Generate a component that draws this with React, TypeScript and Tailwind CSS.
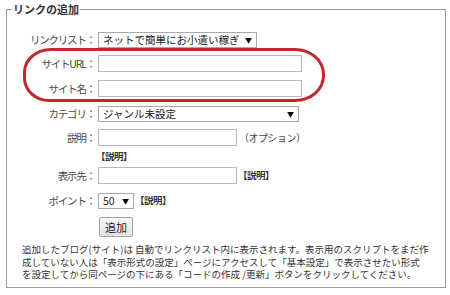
import React from "react";

const font = { fontFamily: '"Noto Sans CJK JP", "Noto Sans", sans-serif' };

function Label({ children }: { children: React.ReactNode }) {
  return (
    <div className="w-[88px] shrink-0 text-right text-[10.5px] tracking-[-1.2px] leading-[17px] text-[#4a4a4a] whitespace-nowrap">
      {children}
    </div>
  );
}

function FakeSelect({ w, text }: { w: string; text: string }) {
  return (
    <div
      className={`${w} h-[16px] border border-[#a9a9a9] bg-white flex items-center justify-between pl-[4px] pr-[4px] text-[10.5px] leading-[14px] text-[#222]`}
    >
      <span className="whitespace-nowrap">{text}</span>
      <span className="text-[7px] text-black">▼</span>
    </div>
  );
}

function TextInput({ w }: { w: string }) {
  return <div className={`${w} h-[17px] border border-[#b8b8b8] bg-white`} />;
}

function Setsumei() {
  return <span className="text-[9.5px] font-bold text-[#333] whitespace-nowrap tracking-[-0.5px]">【説明】</span>;
}

export default function App() {
  return (
    <div className="relative w-[450px] h-[295px] bg-white overflow-hidden" style={font}>
      <fieldset className="ml-[6px] mt-[2px] w-[440px] h-[286px] border border-[#9a9a9a]">
        <legend className="ml-[5px] px-[1px] text-[11px] leading-[14px] font-bold text-[#333]">
          リンクの追加
        </legend>

        <div className="flex flex-col">
          <div className="flex items-center mt-[15px]">
            <Label>リンクリスト：</Label>
            <div className="ml-[3px]">
              <FakeSelect w="w-[159px]" text="ネットで簡単にお小遣い稼ぎ" />
            </div>
          </div>

          <div className="flex items-center mt-[7px]">
            <Label>サイトURL：</Label>
            <div className="ml-[3px]">
              <TextInput w="w-[204px]" />
            </div>
          </div>

          <div className="flex items-center mt-[8px]">
            <Label>サイト名：</Label>
            <div className="ml-[3px]">
              <TextInput w="w-[204px]" />
            </div>
          </div>

          <div className="flex items-center mt-[8px]">
            <Label>カテゴリ：</Label>
            <div className="ml-[3px]">
              <FakeSelect w="w-[201px]" text="ジャンル未設定" />
            </div>
          </div>

          <div className="flex items-start mt-[7px]">
            <Label>説明：</Label>
            <div className="ml-[3px] flex flex-col">
              <div className="flex items-center gap-[2px]">
                <TextInput w="w-[139px]" />
                <span className="text-[10px] text-[#444] whitespace-nowrap tracking-[-0.5px]">（オプション）</span>
              </div>
              <div className="mt-[1px] leading-[13px] -ml-[2px]">
                <Setsumei />
              </div>
            </div>
          </div>

          <div className="flex items-center mt-[4px]">
            <Label>表示先：</Label>
            <div className="ml-[3px] flex items-center gap-[1px]">
              <TextInput w="w-[139px]" />
              <Setsumei />
            </div>
          </div>

          <div className="flex items-center mt-[8px]">
            <Label>ポイント：</Label>
            <div className="ml-[3px] flex items-center gap-[1px]">
              <FakeSelect w="w-[36px]" text="50" />
              <Setsumei />
            </div>
          </div>

          <div className="flex mt-[8px]">
            <div className="w-[88px] shrink-0" />
            <div className="ml-[4px]">
              <div className="w-[34px] h-[20px] border border-[#a6a6a6] rounded-[2px] bg-gradient-to-b from-[#f8f8f8] to-[#e2e2e2] flex items-center justify-center text-[11px] text-[#222]">
                追加
              </div>
            </div>
          </div>

          <p className="ml-[15px] mt-[6px] text-[9.5px] leading-[12.5px] text-[#333] whitespace-nowrap">
            追加したブログ(サイト)は 自動でリンクリスト内に表示されます。表示用のスクリプトをまだ作
            <br />
            成していない人は「表示形式の設定」ページにアクセスして「基本設定」で表示させたい形式
            <br />
            を設定してから同ページの下にある「コードの作成 /更新」ボタンをクリックしてください。
          </p>
        </div>
      </fieldset>

      <div className="absolute left-[23px] top-[48px] w-[302px] h-[54px] border-[3px] border-[#c3262e] rounded-[28px_30px_30px_26px/24px_26px_26px_24px]" />
    </div>
  );
}
